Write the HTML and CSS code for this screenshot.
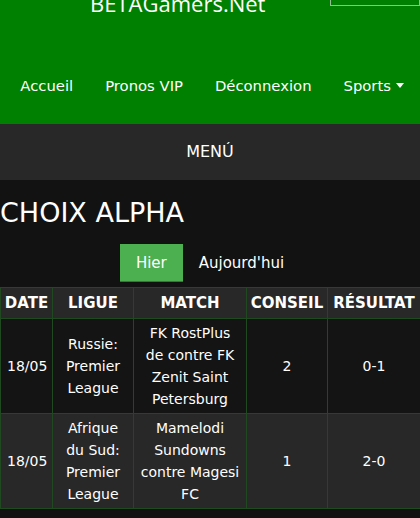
FILE: index.html
```html
<!DOCTYPE html>
<html>
<head>
  <meta name="viewport" content="width=device-width, initial-scale=1.0">
  <title>BETAGamers.Net</title>
  <link rel="stylesheet" href="styles.css">
</head>
<body>
  <div id="header">
    <div class="top">
      <div class="brand">BETAGamers.Net</div>
      <div class="search"></div>
    </div>
    <div class="nav">
      <a href="#">Accueil</a>
      <a href="#">Pronos VIP</a>
      <a href="#">Déconnexion</a>
      <a href="#">Sports <span class="caret"></span></a>
    </div>
  </div>

  <div class="menu">MENÚ</div>

  <h1>CHOIX ALPHA</h1>

  <div class="tabs">
    <span class="tab active">Hier</span>
    <span class="tab">Aujourd'hui</span>
  </div>

  <table>
    <colgroup>
      <col class="c-date">
      <col class="c-ligue">
      <col class="c-match">
      <col class="c-conseil">
      <col class="c-result">
    </colgroup>
    <tr>
      <th>DATE</th>
      <th>LIGUE</th>
      <th>MATCH</th>
      <th>CONSEIL</th>
      <th>RÉSULTAT</th>
    </tr>
    <tr>
      <td>18/05</td>
      <td>Russie: Premier League</td>
      <td>FK RostPlus de contre FK Zenit Saint Petersburg</td>
      <td>2</td>
      <td>0-1</td>
    </tr>
    <tr class="alt">
      <td>18/05</td>
      <td>Afrique du Sud: Premier League</td>
      <td>Mamelodi Sundowns contre&nbsp;Magesi FC</td>
      <td>1</td>
      <td>2-0</td>
    </tr>
  </table>
</body>
</html>
```

FILE: styles.css
```css
body {
  margin: 0;
  background: #121212;
  color: white;
  font-family: "DejaVu Sans", Verdana, sans-serif;
}
#header {
  background: #008000;
  height: 124px;
  overflow: hidden;
}
.top {
  display: flex;
  align-items: flex-end;
  height: 40px;
  margin-top: -34px;
}
.brand {
  font-family: "Open Sans", sans-serif;
  font-size: 22px;
  line-height: 30px;
  margin-left: 90px;
  width: 240px;
  margin-bottom: -12px;
}
.search {
  width: 88px;
  height: 38px;
  border: 1px solid #8fbf8f;
  border-top: none;
}
.nav {
  display: flex;
  justify-content: center;
  margin-top: 71px;
  padding-left: 4px;
}
.nav a {
  color: white;
  text-decoration: none;
  font-size: 14.8px;
  padding: 0 16px;
}
.caret {
  display: inline-block;
  border-left: 4px solid transparent;
  border-right: 4px solid transparent;
  border-top: 5px solid white;
  vertical-align: 3px;
}
.menu {
  background: #282828;
  text-align: center;
  font-size: 16px;
  height: 56px;
  line-height: 56px;
}
h1 {
  font-family: "DejaVu Sans", sans-serif;
  font-weight: normal;
  font-size: 27px;
  margin: 16px 0 0;
  line-height: 34px;
}
.tabs {
  display: flex;
  justify-content: center;
  margin-top: 14px;
}
.tab {
  font-size: 15px;
  padding: 0 16px;
  height: 38px;
  line-height: 38px;
}
.tab.active {
  background: #4caf50;
  border-bottom: 1px solid #2e7d32;
  height: 37px;
}
table {
  margin-top: 5px;
  width: 420px;
  table-layout: fixed;
  border-collapse: collapse;
  font-size: 14px;
  line-height: 22px;
}
.c-date { width: 52px; }
.c-ligue { width: 81px; }
.c-match { width: 113px; }
.c-conseil { width: 81px; }
.c-result { width: 93px; }
th, td {
  border: 1px solid #1f4a1f;
  text-align: center;
  padding: 3px 6px;
}
th {
  background: #282828;
  white-space: nowrap;
  font-size: 15px;
  padding: 4px 0;
}
td {
  background: #141414;
}
tr.alt td {
  background: #282828;
}
```
